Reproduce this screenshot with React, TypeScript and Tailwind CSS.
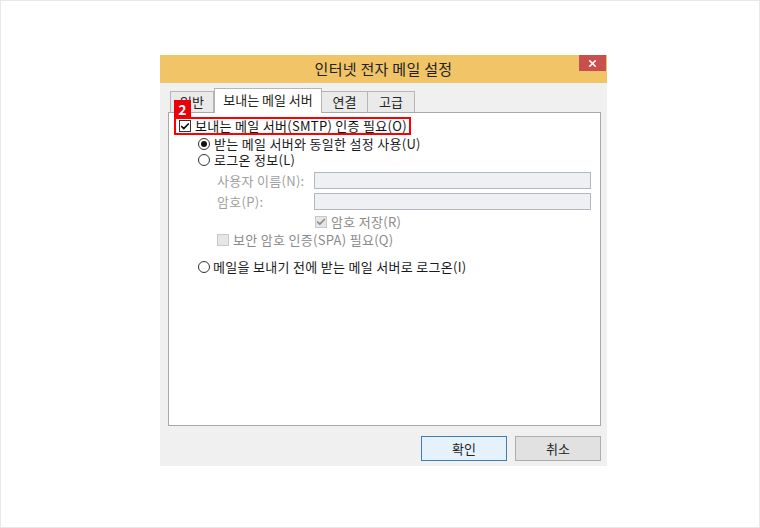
import { Check, X } from "lucide-react";

const font = { fontFamily: '"Noto Sans CJK KR", "Noto Sans", sans-serif' };

function Radio({ checked }: { checked?: boolean }) {
  return (
    <span className="flex h-[12px] w-[12px] shrink-0 items-center justify-center rounded-full border border-[#333] bg-white">
      {checked && <span className="h-[6px] w-[6px] rounded-full bg-[#111]" />}
    </span>
  );
}

function Box({ checked, disabled }: { checked?: boolean; disabled?: boolean }) {
  return (
    <span
      className={
        disabled
          ? "flex h-[12px] w-[12px] shrink-0 items-center justify-center border border-[#c8c8c8] bg-[#e6e6e6]"
          : "flex h-[12px] w-[12px] shrink-0 items-center justify-center border border-[#333] bg-white"
      }
    >
      {checked && (
        <Check
          className={disabled ? "h-[10px] w-[10px] text-[#8a8a8a]" : "h-[11px] w-[11px] text-[#111]"}
          strokeWidth={4}
        />
      )}
    </span>
  );
}

export default function App() {
  return (
    <div
      className="flex h-[528px] w-[760px] border border-[#e8e8e8] bg-white pl-[159px] pt-[54px] text-[13px] leading-[16px] tracking-[0.3px] text-[#1a1a1a]"
      style={font}
    >
      <div className="flex h-[411px] w-[447px] flex-col bg-[#f0f0f0]">
        {/* Title bar */}
        <div className="relative flex h-[28px] items-center justify-center bg-[#f1c467] text-[15px] text-[#222]">
          인터넷 전자 메일 설정
          <span className="absolute right-[1px] top-0 flex h-[16px] w-[27px] items-center justify-center bg-[#c7504f]">
            <X className="h-[11px] w-[11px] text-white" strokeWidth={3.5} />
          </span>
        </div>

        <div className="relative flex flex-col px-[8px] pt-[5px]">
          {/* Badge */}
          <span className="absolute left-[14px] top-[17px] z-10 flex h-[17px] w-[17px] items-center justify-center bg-[#e8000b] text-[14px] font-bold leading-none text-white">
            2
          </span>

          {/* Tabs */}
          <div className="flex h-[24px] items-end pl-[2px] tracking-normal">
            <div className="flex h-[21px] w-[44px] items-center justify-center border border-b-0 border-[#b5b5b5] bg-[#eaeaea] text-[#222]">
              일반
            </div>
            <div className="z-[1] -mb-px flex h-[25px] w-[108px] items-start justify-center border border-b-0 border-[#b5b5b5] bg-white pt-[3px] text-[#222]">
              보내는 메일 서버
            </div>
            <div className="flex h-[21px] w-[46px] items-center justify-center border border-b-0 border-l-0 border-[#b5b5b5] bg-[#eaeaea] text-[#222]">
              연결
            </div>
            <div className="flex h-[21px] w-[47px] items-center justify-center border border-b-0 border-l-0 border-[#b5b5b5] bg-[#eaeaea] text-[#222]">
              고급
            </div>
          </div>

          {/* Panel */}
          <div className="flex h-[314px] w-[433px] flex-col border border-[#a9a9a9] bg-white pl-[5px] pt-[4px]">
            <div className="flex h-[18px] w-[237px] items-center gap-[4px] border-2 border-[#ff0000] pl-[3px] text-[#111]">
              <Box checked />
              보내는 메일 서버(SMTP) 인증 필요(O)
            </div>

            <div className="flex flex-col pl-[24px]">
              <div className="mt-[1px] flex h-[16px] items-center gap-[4px]">
                <Radio checked />
                받는 메일 서버와 동일한 설정 사용(U)
              </div>
              <div className="flex h-[16px] items-center gap-[4px]">
                <Radio />
                로그온 정보(L)
              </div>

              <div className="mt-[4px] flex flex-col gap-[4px] pl-[19px] text-[#a0a0a0]">
                <div className="flex h-[17px] items-center">
                  <span className="w-[97px]">사용자 이름(N):</span>
                  <span className="h-[17px] w-[277px] border border-[#b3b8c0] bg-[#eef0f3]" />
                </div>
                <div className="flex h-[17px] items-center">
                  <span className="w-[97px]">암호(P):</span>
                  <span className="h-[17px] w-[277px] border border-[#b3b8c0] bg-[#eef0f3]" />
                </div>
                <div className="-mt-[1px] flex h-[17px] items-center gap-[4px] pl-[98px] text-[#8a8a8a]">
                  <Box checked disabled />
                  암호 저장(R)
                </div>
                <div className="-mt-[3px] flex h-[17px] items-center gap-[4px] text-[#8a8a8a]">
                  <Box disabled />
                  보안 암호 인증(SPA) 필요(Q)
                </div>
              </div>

              <div className="mt-[10px] flex h-[17px] items-center gap-[3px]">
                <Radio />
                메일을 보내기 전에 받는 메일 서버로 로그온(I)
              </div>
            </div>
          </div>

          {/* Buttons */}
          <div className="flex justify-end gap-[8px] pt-[10px] tracking-normal">
            <button className="flex h-[25px] w-[86px] items-center justify-center border border-[#3c7fb1] bg-[#e5f1fb] text-[#222]">
              확인
            </button>
            <button className="-mr-[2px] flex h-[25px] w-[86px] items-center justify-center border border-[#adadad] bg-[#e1e1e1] text-[#222]">
              취소
            </button>
          </div>
        </div>
      </div>
    </div>
  );
}
